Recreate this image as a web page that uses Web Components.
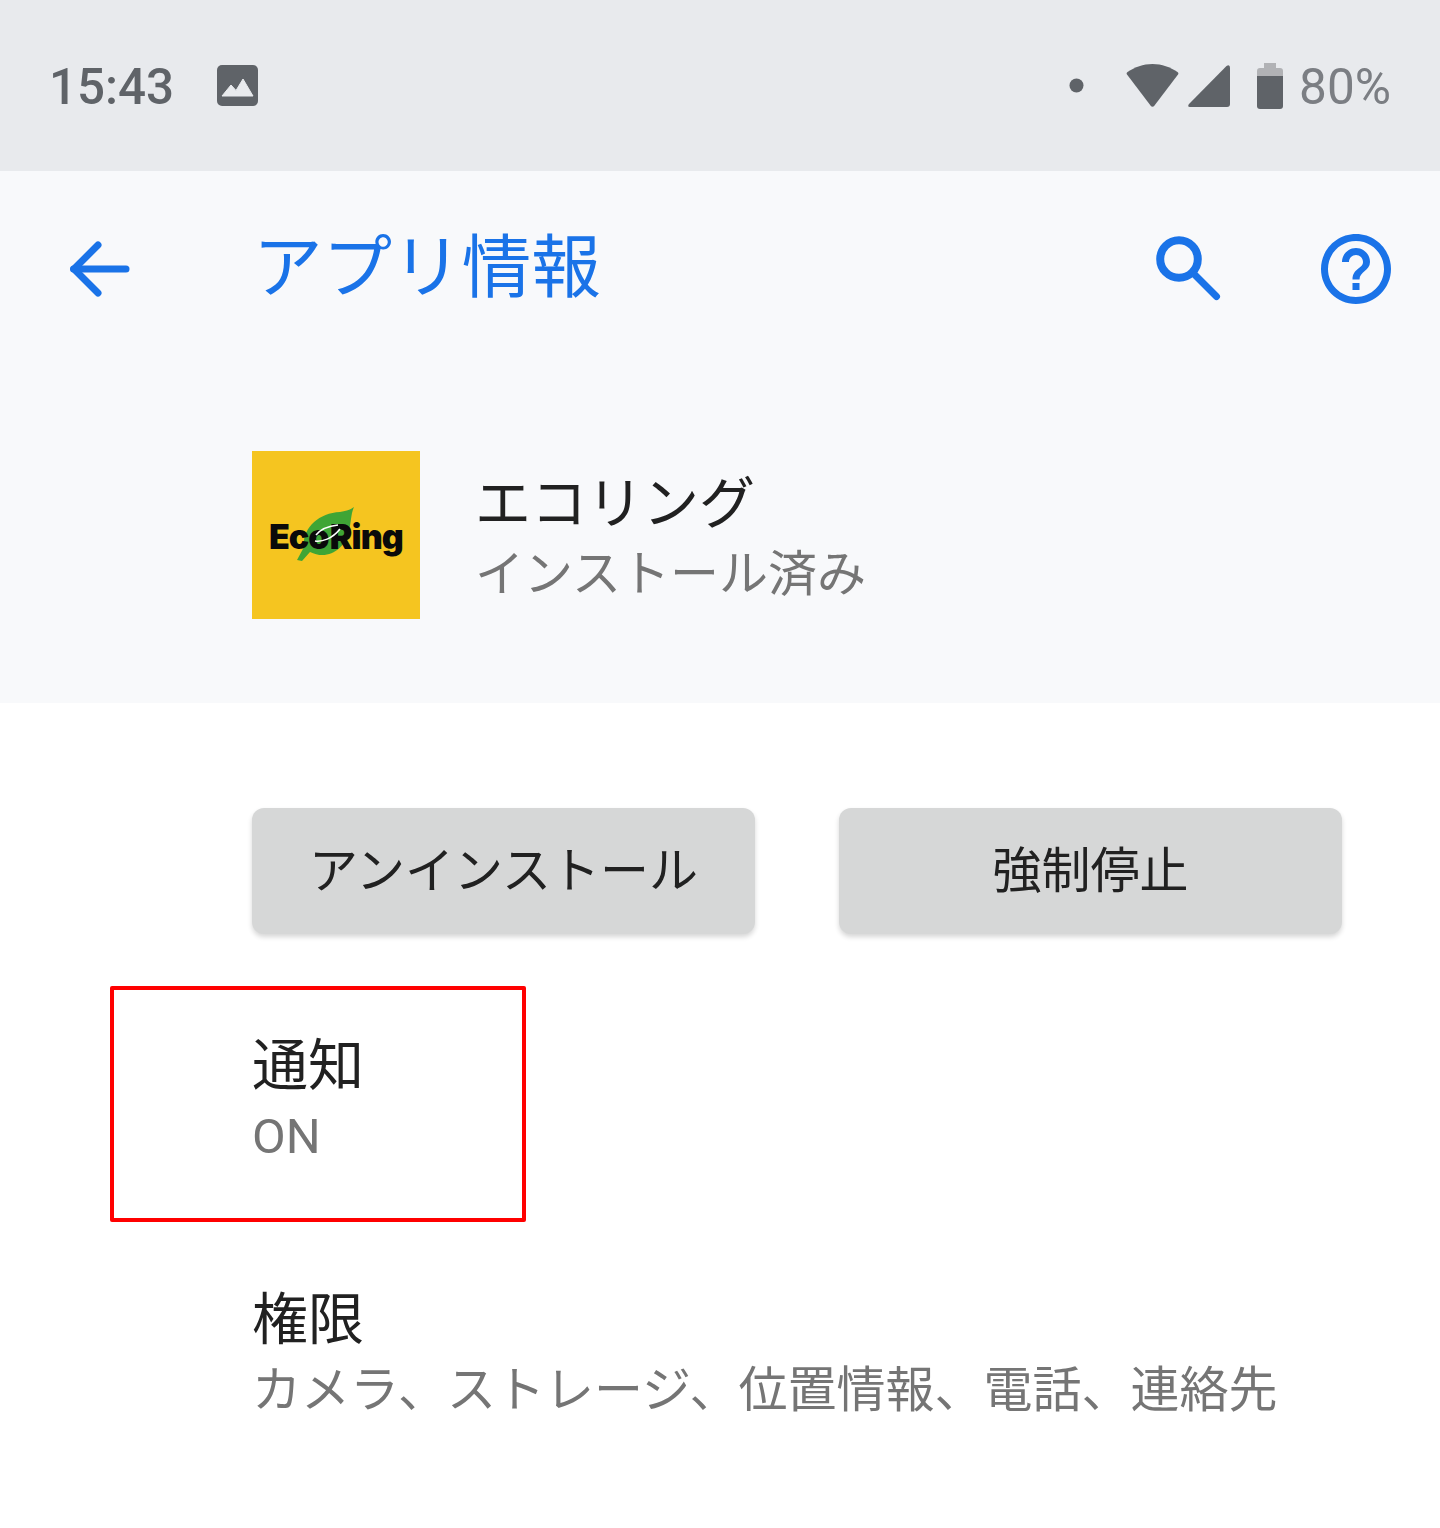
<!DOCTYPE html>
<html lang="ja">
<head>
<meta charset="utf-8">
<title>アプリ情報</title>
<style>
    html, body { margin: 0; padding: 0; background: #fff; }
    body { width: 1440px; height: 1528px; overflow: hidden; font-family: Roboto, "Noto Sans CJK JP", sans-serif; }
</style>
</head>
<body>
<ec-screen>
    <ec-status-bar time="15:43" battery="80%"></ec-status-bar>
    <ec-toolbar title="アプリ情報"></ec-toolbar>
    <ec-app-header name="エコリング" status="インストール済み"></ec-app-header>
    <ec-actions>
        <ec-button>アンインストール</ec-button>
        <ec-button>強制停止</ec-button>
    </ec-actions>
    <ec-pref title="通知" summary="ON"></ec-pref>
    <ec-pref title="権限" summary="カメラ、ストレージ、位置情報、電話、連絡先"></ec-pref>
    <ec-highlight></ec-highlight>
</ec-screen>

<script>
const FONT_STACK = 'Roboto, "Noto Sans CJK JP", sans-serif';

class EcScreen extends HTMLElement {
    constructor() {
        super();
        this.attachShadow({ mode: 'open' });
    }
    connectedCallback() {
        this.shadowRoot.innerHTML = `
            <style>
                :host { display: flex; flex-direction: column; position: relative; width: 1440px; height: 1528px; background: #fff; }
            </style>
            <slot></slot>
        `;
    }
}
customElements.define('ec-screen', EcScreen);

class EcStatusBar extends HTMLElement {
    constructor() {
        super();
        this.attachShadow({ mode: 'open' });
    }
    connectedCallback() {
        const time = this.getAttribute('time') || '';
        const battery = this.getAttribute('battery') || '';
        this.shadowRoot.innerHTML = `
            <style>
                :host {
                    display: flex; align-items: center; justify-content: space-between;
                    height: 171px; box-sizing: border-box; padding: 0 49px 0 49px;
                    background: #e8eaed; font-family: ${FONT_STACK};
                }
                .left, .right { display: flex; align-items: center; height: 100%; }
                .time { font-size: 49.3px; font-weight: 500; color: #5f6368; line-height: 1; margin-top: 5px; width: 168px; }
                .pct { font-size: 49.5px; color: #7b7e83; line-height: 1; margin-top: 5px; margin-left: 16px; }
                svg { display: block; }
                .dot { margin-right: 42px; }
                .wifi { margin-right: 9px; }
                .signal { margin-right: 27px; }
            </style>
            <div class="left">
                <span class="time">${time}</span>
                <svg width="41" height="41" viewBox="0 0 41 41">
                    <rect width="41" height="41" rx="5" fill="#5f6368"/>
                    <path d="M5 31 L14 20 L19 25.5 L26 14 L36 31 Z" fill="#e8eaed" stroke="#e8eaed" stroke-width="1" stroke-linejoin="round"/>
                </svg>
            </div>
            <div class="right">
                <svg class="dot" width="15" height="15" viewBox="0 0 15 15"><circle cx="7.5" cy="7.5" r="7" fill="#5f6368"/></svg>
                <svg class="wifi" width="53" height="43" viewBox="0 0 53 43">
                    <path d="M1 10.5 Q0 9 1.5 8 C9 3 17 0 26.5 0 C36 0 44 3 51.5 8 Q53 9 52 10.5 L28.5 41.5 Q26.5 44 24.5 41.5 Z" fill="#5f6368"/>
                </svg>
                <svg class="signal" width="42" height="42" viewBox="0 0 42 42">
                    <path d="M38.5 1 Q42 -1 42 3 L42 39 Q42 42 39 42 L2 42 Q-1 42 1 39 Z" fill="#5f6368"/>
                </svg>
                <svg width="26" height="46" viewBox="0 0 26 46">
                    <path d="M7 0 H19 V5 H23 Q26 5 26 8 V13 H0 V8 Q0 5 3 5 H7 Z" fill="#b1b2b5"/>
                    <path d="M0 13 H26 V43 Q26 46 23 46 H3 Q0 46 0 43 Z" fill="#5f6368"/>
                </svg>
                <span class="pct">${battery}</span>
            </div>
        `;
    }
}
customElements.define('ec-status-bar', EcStatusBar);

class EcToolbar extends HTMLElement {
    constructor() {
        super();
        this.attachShadow({ mode: 'open' });
    }
    connectedCallback() {
        const title = this.getAttribute('title') || '';
        this.shadowRoot.innerHTML = `
            <style>
                :host {
                    display: flex; align-items: center;
                    height: 196px; box-sizing: border-box; padding-left: 67px;
                    background: #f8f9fb; font-family: ${FONT_STACK};
                }
                svg { display: block; flex: none; }
                .title { font-size: 69.6px; line-height: 1; color: #1a73e8; margin-left: 120px; flex: 1; margin-top: -1px; white-space: nowrap; }
                .search { margin-right: 92px; }
                .help { margin-right: 42px; }
            </style>
            <svg width="66" height="60" viewBox="0 0 66 60" fill="none" stroke="#1a73e8" stroke-width="7" stroke-linecap="round" stroke-linejoin="round">
                <path d="M6.5 30 H59"/>
                <path d="M31 6 L7 30 L31 54"/>
            </svg>
            <span class="title">${title}</span>
            <svg class="search" width="66" height="66" viewBox="0 0 66 66" fill="none" stroke="#1a73e8" stroke-width="7" stroke-linecap="round">
                <circle cx="23" cy="23" r="18.8" stroke-width="8"/>
                <path d="M39 39 L60.5 60.5"/>
            </svg>
            <svg class="help" width="84" height="84" viewBox="0 0 24 24" fill="#1a73e8">
                <path d="M11 18h2v-2h-2v2zm1-16C6.48 2 2 6.48 2 12s4.48 10 10 10 10-4.48 10-10S17.52 2 12 2zm0 18c-4.41 0-8-3.59-8-8s3.59-8 8-8 8 3.59 8 8-3.59 8-8 8zm0-14c-2.21 0-4 1.79-4 4h2c0-1.1.9-2 2-2s2 .9 2 2c0 2-3 1.75-3 5h2c0-2.25 3-2.5 3-5 0-2.21-1.79-4-4-4z"/>
            </svg>
        `;
    }
}
customElements.define('ec-toolbar', EcToolbar);

class EcLogo extends HTMLElement {
    constructor() {
        super();
        this.attachShadow({ mode: 'open' });
    }
    connectedCallback() {
        this.shadowRoot.innerHTML = `
            <style>
                :host { display: block; position: relative; width: 168px; height: 168px; background: #f5c520; flex: none; overflow: hidden; }
                svg { position: absolute; left: 0; top: 0; }
                .word {
                    position: absolute; left: 17px; top: 68.5px;
                    font: 900 34px/1 Inter, "Liberation Sans", sans-serif; color: #0a0a0a;
                    letter-spacing: -1px; white-space: nowrap; word-spacing: -4.5px;
                }
            </style>
            <svg width="168" height="168" viewBox="0 0 168 168">
                <path d="M45 109 L52 96 C50 78 66 62 88 61 C94 60 98 59 102 56 C99 62 99 72 97 80 C93 98 76 110 58 101 L50 110 Z" fill="#3fa535"/>
            </svg>
            <span class="word">Eco Ring</span>
            <svg width="168" height="168" viewBox="0 0 168 168" fill="none" stroke="#fff" stroke-width="1.6">
                <path d="M64 84 C68 79 76 75 86 74"/>
                <path d="M63 90 C70 91 80 88 88 78"/>
            </svg>
        `;
    }
}
customElements.define('ec-logo', EcLogo);

class EcAppHeader extends HTMLElement {
    constructor() {
        super();
        this.attachShadow({ mode: 'open' });
    }
    connectedCallback() {
        const name = this.getAttribute('name') || '';
        const status = this.getAttribute('status') || '';
        this.shadowRoot.innerHTML = `
            <style>
                :host {
                    display: flex; align-items: flex-start;
                    height: 336px; box-sizing: border-box; padding: 84px 0 0 252px;
                    background: #f8f9fb; font-family: ${FONT_STACK};
                }
                .text { margin-left: 55px; display: flex; flex-direction: column; }
                .name { font-size: 56px; line-height: 70px; color: #212121; margin-top: 18px; white-space: nowrap; }
                .status { font-size: 49px; line-height: 72px; color: #757575; white-space: nowrap; }
            </style>
            <ec-logo></ec-logo>
            <div class="text">
                <span class="name">${name}</span>
                <span class="status">${status}</span>
            </div>
        `;
    }
}
customElements.define('ec-app-header', EcAppHeader);

class EcActions extends HTMLElement {
    constructor() {
        super();
        this.attachShadow({ mode: 'open' });
    }
    connectedCallback() {
        this.shadowRoot.innerHTML = `
            <style>
                :host { display: flex; gap: 84px; padding: 105px 0 0 252px; height: 126px; margin-bottom: 40px; }
            </style>
            <slot></slot>
        `;
    }
}
customElements.define('ec-actions', EcActions);

class EcButton extends HTMLElement {
    constructor() {
        super();
        this.attachShadow({ mode: 'open' });
    }
    connectedCallback() {
        this.shadowRoot.innerHTML = `
            <style>
                :host {
                    display: flex; align-items: center; justify-content: center;
                    width: 503px; height: 126px; border-radius: 12px;
                    background: #d6d7d7; color: #212121;
                    box-shadow: 0 3px 5px rgba(0,0,0,0.16);
                    font: 49px/1 ${FONT_STACK};
                }
            </style>
            <slot></slot>
        `;
    }
}
customElements.define('ec-button', EcButton);

class EcPref extends HTMLElement {
    constructor() {
        super();
        this.attachShadow({ mode: 'open' });
    }
    connectedCallback() {
        const title = this.getAttribute('title') || '';
        const summary = this.getAttribute('summary') || '';
        this.shadowRoot.innerHTML = `
            <style>
                :host {
                    display: flex; flex-direction: column; justify-content: center;
                    height: 254px; box-sizing: border-box; padding-left: 252px;
                    font-family: ${FONT_STACK};
                }
                .title { font-size: 56px; line-height: 72px; color: #212121; padding-top: 1px; }
                .summary { font-size: 49px; line-height: 72px; color: #757575; white-space: nowrap; margin-top: -1px; }
            </style>
            <span class="title">${title}</span>
            <span class="summary">${summary}</span>
        `;
    }
}
customElements.define('ec-pref', EcPref);

// red annotation drawn over the screenshot
class EcHighlight extends HTMLElement {
    constructor() {
        super();
        this.attachShadow({ mode: 'open' });
    }
    connectedCallback() {
        this.shadowRoot.innerHTML = `
            <style>
                :host {
                    position: absolute; left: 110px; top: 986px;
                    width: 416px; height: 236px; box-sizing: border-box;
                    border: 4px solid #f00; border-radius: 2px;
                }
            </style>
        `;
    }
}
customElements.define('ec-highlight', EcHighlight);
</script>
</body>
</html>
